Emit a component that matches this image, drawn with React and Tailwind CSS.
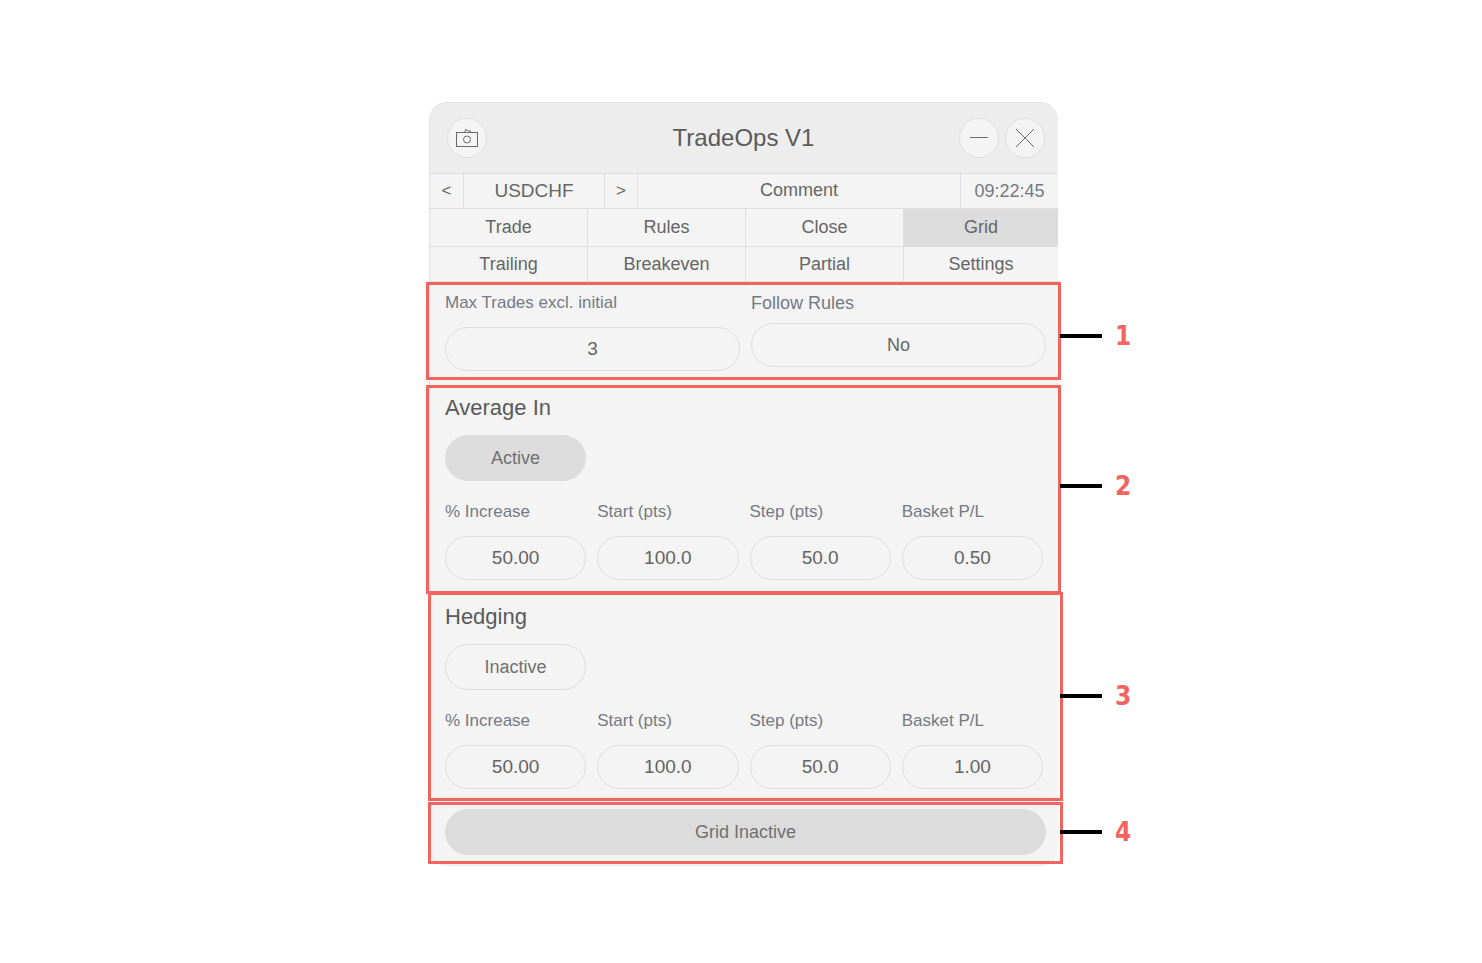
import React, { useState } from 'react';
import clsx from 'clsx';

const TABS = ['Trade', 'Rules', 'Close', 'Grid', 'Trailing', 'Breakeven', 'Partial', 'Settings'];

const SYMBOLS = ['USDCHF', 'EURUSD', 'GBPUSD'];

const AVERAGE_FIELDS = [
  { id: 'avg-increase', label: '% Increase', value: '50.00' },
  { id: 'avg-start', label: 'Start (pts)', value: '100.0' },
  { id: 'avg-step', label: 'Step (pts)', value: '50.0' },
  { id: 'avg-basket', label: 'Basket P/L', value: '0.50' }
];

const HEDGING_FIELDS = [
  { id: 'hedge-increase', label: '% Increase', value: '50.00' },
  { id: 'hedge-start', label: 'Start (pts)', value: '100.0' },
  { id: 'hedge-step', label: 'Step (pts)', value: '50.0' },
  { id: 'hedge-basket', label: 'Basket P/L', value: '1.00' }
];

const CameraIcon = () => (
  <svg width="24" height="20" viewBox="0 0 24 20" fill="none" stroke="#6b6b6b" strokeWidth="1" aria-hidden="true">
    <rect x="1.5" y="4.5" width="21" height="14" />
    <circle cx="12" cy="11.5" r="3.5" />
    <path d="M9.5 4.5V3.5L10.5 3V1.5L13.5 3H15.5V4.5" />
  </svg>
);

const RoundButton = ({ label, children }) => (
  <button
    type="button"
    aria-label={label}
    className="flex h-10 w-10 shrink-0 items-center justify-center rounded-full border border-[#dedede] bg-[#f4f4f4]"
  >
    {children}
  </button>
);

// Red frame around a section, with its leader line and number
const Callout = ({ number, frame, marker }) => (
  <>
    <div className={clsx('pointer-events-none absolute z-10 border-3 border-[#f4645f]', frame)} />
    <div className={clsx('absolute left-full z-20 ml-0.5 flex h-7 items-center gap-[13px]', marker)}>
      <span className="h-1 w-[42px] bg-black" />
      <span className="font-['DejaVu_Sans_Condensed','DejaVu_Sans',sans-serif] text-[26px] leading-7 font-bold text-[#f4645f]">{number}</span>
    </div>
  </>
);

const PillInput = ({ id, value, className }) => (
  <input
    id={id}
    type="text"
    defaultValue={value}
    className={clsx(
      'block h-11 w-full min-w-0 rounded-full border border-[#dedede] bg-transparent text-center text-[19px] text-[#646464]',
      className
    )}
  />
);

const ToggleButton = ({ on, onClick, children, className }) => (
  <button
    type="button"
    aria-pressed={on}
    onClick={onClick}
    className={clsx(
      'block h-[46px] rounded-full border border-[#dcdcdc] text-center text-[18px] text-[#707070]',
      on && 'bg-[#dcdcdc]',
      className
    )}
  >
    {children}
  </button>
);

const StrategySection = ({ title, fields, initialActive, children }) => {
  const [active, setActive] = useState(initialActive);

  return (
    <section className="relative px-[15px] pt-[9px] pb-[14px]">
      <h2 className="text-[22px] leading-7 text-[#5a5a5a]">{title}</h2>
      <ToggleButton on={active} onClick={() => setActive(!active)} className="mt-[13px] w-[141px]">
        {active ? 'Active' : 'Inactive'}
      </ToggleButton>
      <div className="mt-[19px] grid grid-cols-4 gap-[11px]">
        {fields.map(field => (
          <div key={field.id}>
            <label htmlFor={field.id} className="block text-[17px] leading-6 text-[#747a85]">{field.label}</label>
            <PillInput id={field.id} value={field.value} className="mt-3" />
          </div>
        ))}
      </div>
      {children}
    </section>
  );
};

const App = () => {
  const [activeTab, setActiveTab] = useState('Grid');
  const [symbolIndex, setSymbolIndex] = useState(0);
  const [followRules, setFollowRules] = useState(false);
  const [gridActive, setGridActive] = useState(false);

  const stepSymbol = delta => setSymbolIndex((symbolIndex + delta + SYMBOLS.length) % SYMBOLS.length);

  return (
    <main className="min-h-screen bg-white pt-[102px] pb-24 pl-[5px] font-['Liberation_Sans',Arial,sans-serif] text-[#666666]">
      <div className="mx-auto w-full max-w-[629px] rounded-[18px] border-t border-b border-l border-[#e2e2e2] border-b-[#ededed] bg-[#f4f4f4]">

        {/* Title bar */}
        <header className="flex h-[71px] items-center rounded-tl-[17px] rounded-tr-[17px] border-b border-[#dedede] bg-[#ededed] pr-[13px] pl-[17px]">
          <div className="w-[81px]">
            <RoundButton label="Screenshot"><CameraIcon /></RoundButton>
          </div>
          <h1 className="flex-1 text-center text-[24px] leading-8 text-[#5a5a5a]">TradeOps V1</h1>
          <div className="flex gap-1.5">
            <RoundButton label="Minimize">
              <svg width="20" height="20" viewBox="0 0 20 20" stroke="#6b6b6b" aria-hidden="true">
                <path d="M1 9.5H19" />
              </svg>
            </RoundButton>
            <RoundButton label="Close window">
              <svg width="20" height="20" viewBox="0 0 20 20" stroke="#6b6b6b" aria-hidden="true">
                <path d="M1 1 19 19M19 1 1 19" />
              </svg>
            </RoundButton>
          </div>
        </header>

        {/* Symbol row */}
        <div className="flex h-[35px] items-stretch border-b border-[#dedede]">
          <button type="button" aria-label="Previous symbol" onClick={() => stepSymbol(-1)} className="w-[34px] border-r border-[#dedede] text-[17px]">&lt;</button>
          <div className="flex w-[141px] items-center justify-center border-r border-[#dedede] text-[19px]">{SYMBOLS[symbolIndex]}</div>
          <button type="button" aria-label="Next symbol" onClick={() => stepSymbol(1)} className="w-[33px] border-r border-[#dedede] text-[17px]">&gt;</button>
          <input
            type="text"
            aria-label="Comment"
            defaultValue="Comment"
            className="min-w-0 flex-1 border-r border-[#dedede] bg-transparent pb-0.5 text-center text-[18px]"
          />
          <time className="flex w-[97px] items-center justify-center text-[18px] text-[#747a85]">09:22:45</time>
        </div>

        {/* Tabs */}
        <nav className="grid grid-cols-[158fr_158fr_158fr_154fr] grid-rows-[38px_35px]">
          {TABS.map(tab => (
            <button
              key={tab}
              type="button"
              onClick={() => setActiveTab(tab)}
              className={clsx(
                'border-r border-b border-[#dedede] text-[18px] nth-[4n]:border-r-0',
                activeTab === tab && 'bg-[#dcdcdc]'
              )}
            >
              {tab}
            </button>
          ))}
        </nav>

        <section className="relative grid grid-cols-2 gap-[11px] pt-[9px] pr-3 pb-[13px] pl-[15px]">
          <div>
            <label htmlFor="max-trades" className="block text-[17px] leading-6 text-[#747a85]">Max Trades excl. initial</label>
            <PillInput id="max-trades" value="3" className="mt-3" />
          </div>
          <div>
            <label htmlFor="follow-rules" className="block text-[18px] leading-6 text-[#747a85]">Follow Rules</label>
            <button
              id="follow-rules"
              type="button"
              onClick={() => setFollowRules(!followRules)}
              className="mt-2 mb-[5px] block h-11 w-full rounded-full border border-[#dedede] text-center text-[18px]"
            >
              {followRules ? 'Yes' : 'No'}
            </button>
          </div>
          <Callout number={1} frame="top-0 bottom-[5px] -left-1 -right-[3px]" marker="top-10" />
        </section>

        <StrategySection title="Average In" fields={AVERAGE_FIELDS} initialActive={true}>
          <Callout number={2} frame="inset-y-0 -left-1 -right-[3px]" marker="top-[87px]" />
        </StrategySection>

        <StrategySection title="Hedging" fields={HEDGING_FIELDS} initialActive={false}>
          <Callout number={3} frame="-top-0.5 bottom-0.5 -left-0.5 -right-[5px]" marker="top-[88px]" />
        </StrategySection>

        <section className="relative pt-1.5 pr-3 pb-2.5 pl-[15px]">
          <ToggleButton on={!gridActive} onClick={() => setGridActive(!gridActive)} className="w-full">
            {gridActive ? 'Grid Active' : 'Grid Inactive'}
          </ToggleButton>
          <Callout number={4} frame="-top-px bottom-px -left-0.5 -right-[5px]" marker="top-[15px]" />
        </section>
      </div>
    </main>
  );
};

export default App;
